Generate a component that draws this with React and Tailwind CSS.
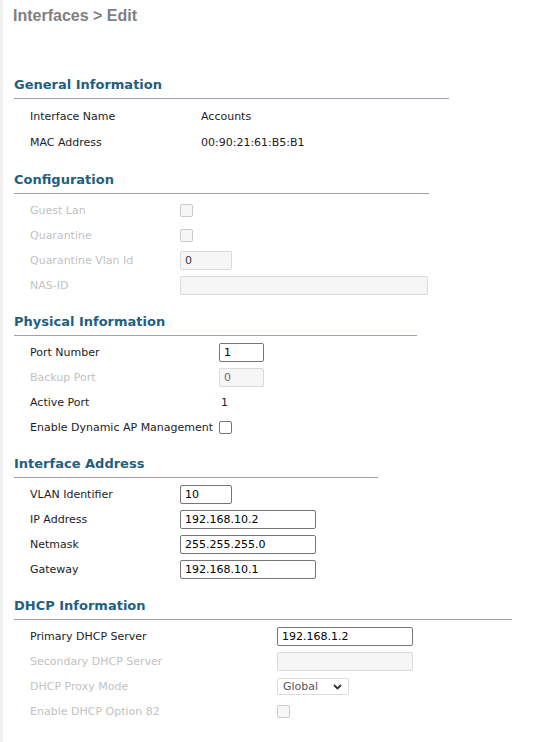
import React from "react";

const font = { fontFamily: '"DejaVu Sans", Verdana, sans-serif' };

const SectionHeader = ({ title, className }) => {
  return (
    <div
      className={`pt-[1px] pb-[5px] border-b border-[#9a9ec0] text-[13px] leading-[16px] font-bold text-[#1f5f80] ${className}`}
    >
      {title}
    </div>
  );
};

const Row = ({ label, disabled, labelW, h = "h-[25px]", children }) => {
  return (
    <div className={`flex items-center pl-[16px] ${h}`}>
      <div
        className={`${labelW} shrink-0 text-[11px] leading-[13px] ${
          disabled ? "text-[#c2c2c2]" : "text-[#1c1c24]"
        }`}
      >
        {label}
      </div>
      <div className="flex items-center text-[11px] leading-[13px] text-[#1c1c24]">
        {children}
      </div>
    </div>
  );
};

const TextBox = ({ value = "", w, disabled, dim }) => {
  return (
    <div
      className={`${w} h-[19px] flex items-center px-[4px] rounded-[2px] text-[11px] ${
        disabled
          ? `border border-[#dadada] bg-[#f6f6f6] ${dim ? "text-[#6b6b6b]" : "text-[#3a3a3a]"}`
          : "border border-[#767676] bg-white text-black"
      }`}
    >
      {value}
    </div>
  );
};

const Check = ({ disabled }) => {
  return (
    <div
      className={`w-[13px] h-[13px] rounded-[2px] ${
        disabled
          ? "border border-[#cacaca] bg-[#f7f7f7]"
          : "border border-[#767676] bg-white"
      }`}
    />
  );
};

export default function App() {
  return (
    <div
      className="min-h-[742px] bg-white border-l-[3px] border-[#f0f0f0] pl-[10px]"
      style={font}
    >
      <div
        className="pt-[6px] text-[16px] leading-[20px] font-bold text-[#7f7f7f]"
        style={{ fontFamily: '"Liberation Sans", Arial, sans-serif' }}
      >
        Interfaces &gt; Edit
      </div>

      <div className="ml-[1px]">
        {/* General */}
        <SectionHeader title="General Information" className="mt-[50px] w-[435px]" />
        <div className="pt-[4px]">
          <Row label="Interface Name" labelW="w-[171px]" h="h-[26px]">
            Accounts
          </Row>
          <Row label="MAC Address" labelW="w-[171px]" h="h-[26px]">
            00:90:21:61:B5:B1
          </Row>
        </div>

        {/* Configuration */}
        <SectionHeader title="Configuration" className="mt-[16px] w-[415px]" />
        <div className="pt-[4px]">
          <Row label="Guest Lan" disabled labelW="w-[150px]">
            <Check disabled />
          </Row>
          <Row label="Quarantine" disabled labelW="w-[150px]">
            <Check disabled />
          </Row>
          <Row label="Quarantine Vlan Id" disabled labelW="w-[150px]">
            <TextBox value="0" w="w-[52px]" disabled />
          </Row>
          <Row label="NAS-ID" disabled labelW="w-[150px]">
            <TextBox w="w-[248px]" disabled />
          </Row>
        </div>

        {/* Physical */}
        <SectionHeader title="Physical Information" className="mt-[15px] w-[403px]" />
        <div className="pt-[4px]">
          <Row label="Port Number" labelW="w-[189px]">
            <TextBox value="1" w="w-[45px]" />
          </Row>
          <Row label="Backup Port" disabled labelW="w-[189px]">
            <TextBox value="0" w="w-[45px]" disabled dim />
          </Row>
          <Row label="Active Port" labelW="w-[189px]">
            <span className="pl-[2px]">1</span>
          </Row>
          <Row label="Enable Dynamic AP Management" labelW="w-[189px]">
            <Check />
          </Row>
        </div>

        {/* Interface address */}
        <SectionHeader title="Interface Address" className="mt-[15px] w-[364px]" />
        <div className="pt-[4px]">
          <Row label="VLAN Identifier" labelW="w-[150px]">
            <TextBox value="10" w="w-[52px]" />
          </Row>
          <Row label="IP Address" labelW="w-[150px]">
            <TextBox value="192.168.10.2" w="w-[136px]" />
          </Row>
          <Row label="Netmask" labelW="w-[150px]">
            <TextBox value="255.255.255.0" w="w-[136px]" />
          </Row>
          <Row label="Gateway" labelW="w-[150px]">
            <TextBox value="192.168.10.1" w="w-[136px]" />
          </Row>
        </div>

        {/* DHCP */}
        <SectionHeader title="DHCP Information" className="mt-[15px] w-[498px]" />
        <div className="pt-[4px]">
          <Row label="Primary DHCP Server" labelW="w-[247px]">
            <TextBox value="192.168.1.2" w="w-[136px]" />
          </Row>
          <Row label="Secondary DHCP Server" disabled labelW="w-[247px]">
            <TextBox w="w-[136px]" disabled />
          </Row>
          <Row label="DHCP Proxy Mode" disabled labelW="w-[247px]">
            <div className="w-[72px] h-[17px] flex items-center justify-between pl-[5px] pr-[6px] border border-[#dcdcdc] rounded-[2px] bg-white text-[11px] text-[#555]">
              <span>Global</span>
              <svg width="9" height="6" viewBox="0 0 9 6">
                <path d="M1 1 L4.5 4.5 L8 1" fill="none" stroke="#333" strokeWidth="1.8" />
              </svg>
            </div>
          </Row>
          <Row label="Enable DHCP Option 82" disabled labelW="w-[247px]">
            <Check disabled />
          </Row>
        </div>
      </div>
    </div>
  );
}
